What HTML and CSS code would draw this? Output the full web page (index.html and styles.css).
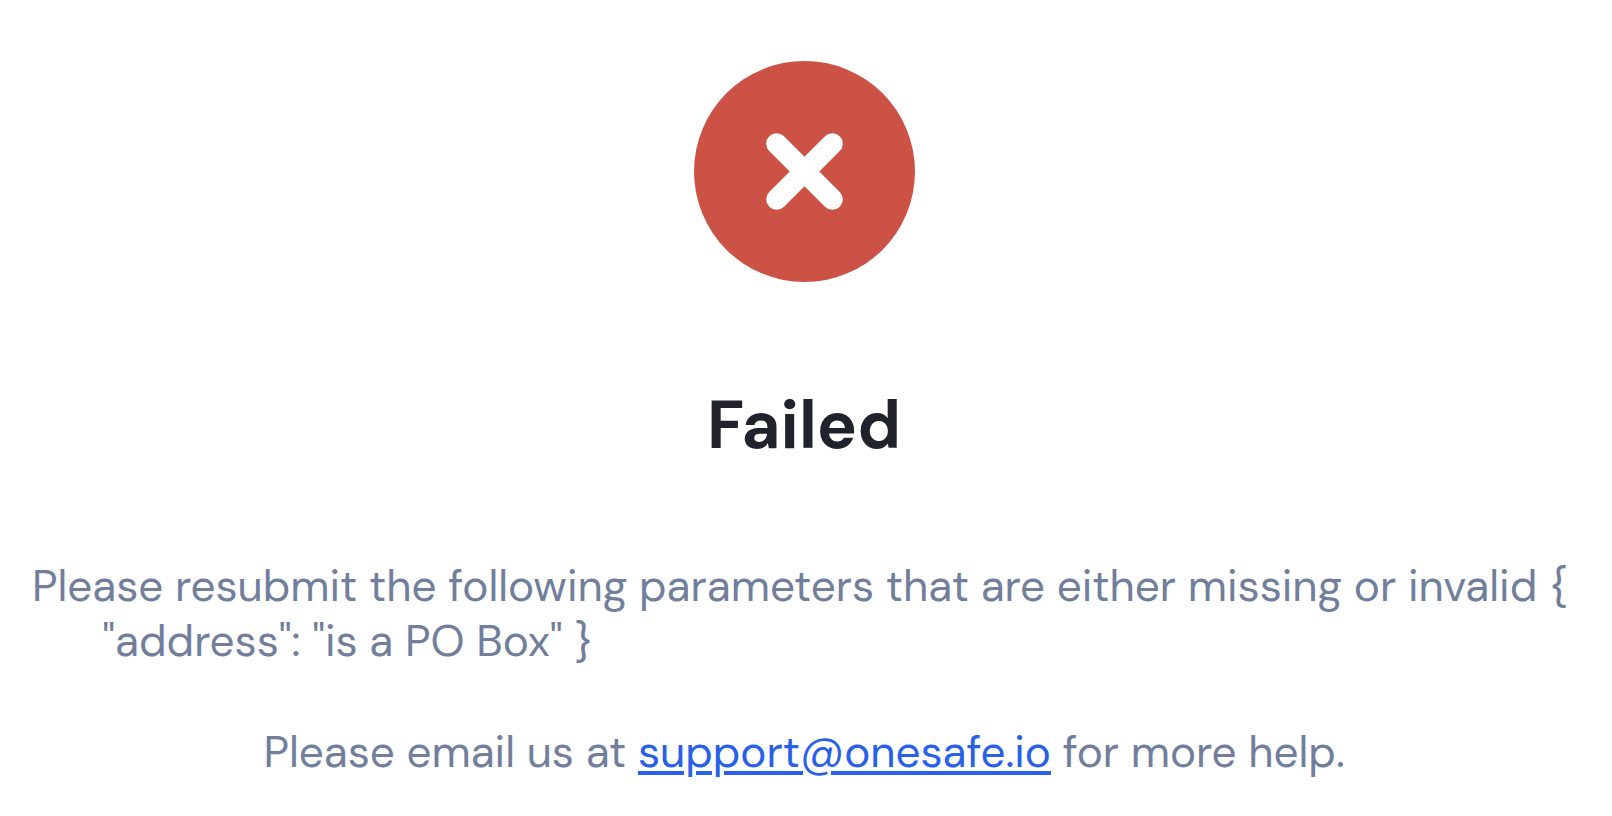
FILE: index.html
```html
<!DOCTYPE html>
<html lang="en">
  <head>
    <meta charset="UTF-8" />
    <title>Failed</title>
    <link rel="stylesheet" href="styles.css">
  </head>
  <body>
    <main class="status">
      <svg class="status-icon" viewBox="0 0 222 222" aria-hidden="true">
        <circle cx="111" cy="111" r="111" fill="#cd5246" />
        <path d="M83 83 L139 139 M139 83 L83 139" stroke="#fff" stroke-width="21" stroke-linecap="round" />
      </svg>
      <h1>Failed</h1>
      <p class="reason">Please resubmit the following parameters that are either missing or invalid {
      "address": "is a PO Box" }</p>
      <p class="help">Please email us at <a href="mailto:support@onesafe.io">support@onesafe.io</a> for more help.</p>
    </main>
  </body>
</html>
```

FILE: styles.css
```css
body {
  font-family: "DM Sans", Inter, sans-serif;
  background-color: #fff;
  color: #717e9c;
  margin: 0;
}
.status {
  display: flex;
  flex-direction: column;
  align-items: center;
  padding: 61px 36px 16px 32px;
}
.status-icon {
  width: 221px;
  height: 221px;
}
h1 {
  margin: 102px 0 91px;
  font-size: 67px;
  line-height: 84px;
  font-weight: 700;
  color: #20232b;
}
p {
  margin: 0;
  font-size: 44px;
  line-height: 55px;
}
.reason {
  align-self: stretch;
  white-space: pre-wrap;
}
.help {
  margin-top: 56px;
}
a {
  color: #2860e8;
  text-decoration-thickness: 4px;
  text-underline-offset: 4px;
}
```
